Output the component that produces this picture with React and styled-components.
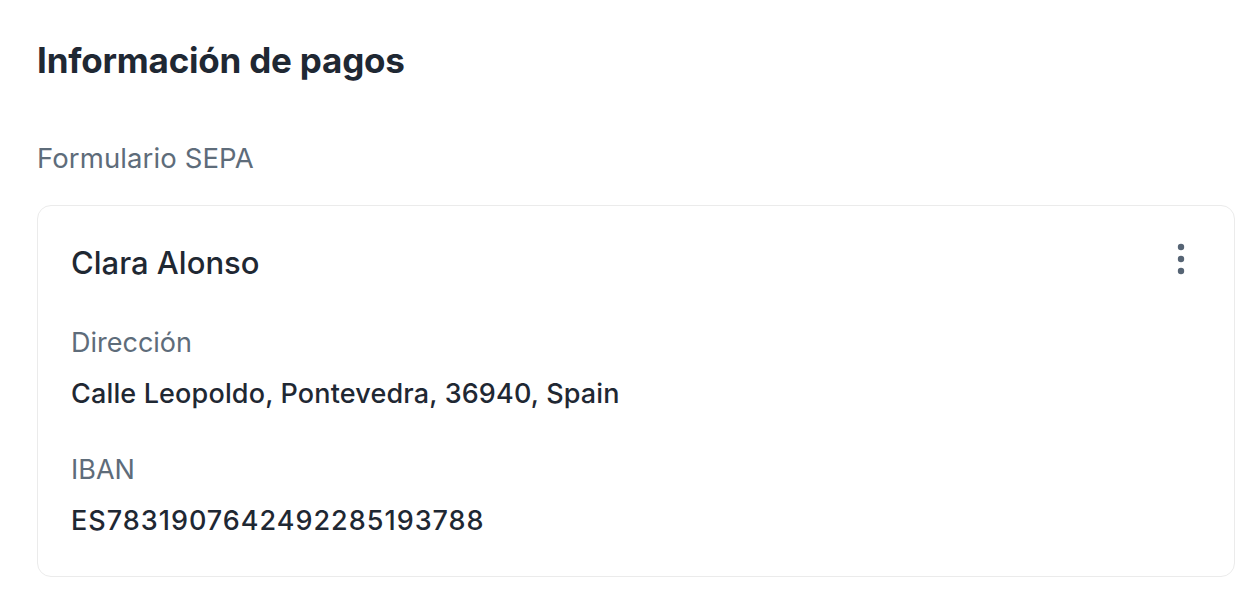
import React from 'react';
import styled, { createGlobalStyle } from 'styled-components';

const GlobalStyle = createGlobalStyle`
  html, body {
    margin: 0;
    padding: 0;
    background: #ffffff;
  }
  body {
    font-family: Inter, "Noto Sans", sans-serif;
    color: #1f2833;
  }
`;

const Page = styled.div`
  padding: 36px 23px 0 37px;
`;

const Title = styled.h1`
  margin: 0;
  font-size: 35px;
  line-height: 48px;
  font-weight: 700;
  color: #1f2833;
  letter-spacing: -0.2px;
`;

const SectionLabel = styled.div`
  margin-top: 56px;
  font-size: 27.5px;
  line-height: 36px;
  color: #5e6c7a;
  letter-spacing: 0.1px;
`;

const Card = styled.div`
  margin-top: 29px;
  border: 1.5px solid #ebebeb;
  border-radius: 14px;
  padding: 32.5px 34px 37px 33px;
  display: flex;
  flex-direction: column;
`;

const CardHeader = styled.div`
  display: flex;
  align-items: center;
  justify-content: space-between;
`;

const Name = styled.div`
  font-size: 31px;
  line-height: 40px;
  font-weight: 500;
  color: #1f2833;
`;

const MenuButton = styled.button`
  border: none;
  background: transparent;
  padding: 0;
  width: 28px;
  height: 40px;
  margin-right: 5px;
  margin-bottom: 8px;
  display: flex;
  align-items: center;
  justify-content: center;
  cursor: pointer;
`;

const Field = styled.div`
  margin-top: ${p => p.$gap}px;
  display: flex;
  flex-direction: column;
  gap: 15px;
`;

const FieldLabel = styled.div`
  font-size: 27px;
  line-height: 36px;
  color: #5e6c7a;
`;

const FieldValue = styled.div`
  font-size: 27px;
  line-height: 36px;
  font-weight: 500;
  color: #1f2833;
  letter-spacing: ${p => p.$spacing || 0}px;
`;

const KebabIcon = () => (
  <svg width="8" height="32" viewBox="0 0 8 32">
    <circle cx="4" cy="4" r="3.2" fill="#566474" />
    <circle cx="4" cy="16" r="3.2" fill="#566474" />
    <circle cx="4" cy="28" r="3.2" fill="#566474" />
  </svg>
);

const App = () => {
  const fields = [
    { label: 'Dirección', value: 'Calle Leopoldo, Pontevedra, 36940, Spain', gap: 38, spacing: 0.15 },
    { label: 'IBAN', value: 'ES7831907642492285193788', gap: 40, spacing: 1 },
  ];

  return (
    <>
      <GlobalStyle />
      <Page>
        <Title>Información de pagos</Title>
        <SectionLabel>Formulario SEPA</SectionLabel>
        <Card>
          <CardHeader>
            <Name>Clara Alonso</Name>
            <MenuButton aria-label="Más opciones">
              <KebabIcon />
            </MenuButton>
          </CardHeader>
          {fields.map(f => (
            <Field key={f.label} $gap={f.gap}>
              <FieldLabel>{f.label}</FieldLabel>
              <FieldValue $spacing={f.spacing}>{f.value}</FieldValue>
            </Field>
          ))}
        </Card>
      </Page>
    </>
  );
};

export default App;
